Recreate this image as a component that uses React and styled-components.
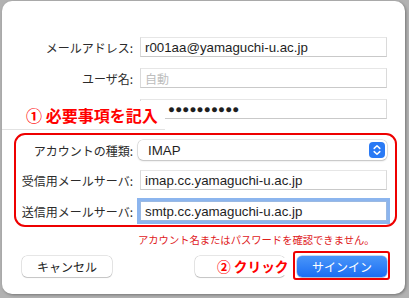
import React from "react";
import styled, { createGlobalStyle } from "styled-components";

const Global = createGlobalStyle`
  html, body { margin: 0; padding: 0; }
  body {
    background: #b2b2b2;
    font-family: "Noto Sans CJK JP", "Liberation Sans", sans-serif;
    width: 409px;
    height: 298px;
    overflow: hidden;
  }
`;

const Page = styled.div`
  padding: 1px 4px 4px 2px;
  width: 409px;
  height: 298px;
  box-sizing: border-box;
`;

const Window = styled.div`
  position: relative;
  width: 403px;
  height: 293px;
  background: #ffffff;
  border-radius: 10px;
  box-shadow: 1px 1px 3px rgba(0, 0, 0, 0.35);
  padding-top: 36px;
  box-sizing: border-box;
  display: flex;
  flex-direction: column;
`;

const Rows = styled.div`
  display: flex;
  flex-direction: column;
  gap: ${(p) => p.$gap}px;
  margin-top: ${(p) => p.$top || 0}px;
  position: relative;
`;

const Highlight = styled(Rows)`
  &::after {
    content: "";
    position: absolute;
    left: 12px;
    right: 8px;
    top: -7px;
    bottom: -6px;
    border: 2px solid #ee0000;
    border-radius: 11px;
    pointer-events: none;
  }
`;

const Row = styled.div`
  display: flex;
  align-items: center;
  height: 20px;
  margin-top: ${(p) => p.$nudge || 0}px;
`;

const Label = styled.div`
  width: 131px;
  margin-right: 7px;
  text-align: right;
  font-size: 12px;
  color: #2b2b2b;
  white-space: nowrap;
`;

const Field = styled.div`
  width: 247px;
  height: 20px;
  box-sizing: border-box;
  border: 1px solid #dadada;
  border-top-color: #e6e6e6;
  border-bottom-color: #c9c9c9;
  padding-left: 4px;
  display: flex;
  align-items: center;
  font-family: "Liberation Sans", sans-serif;
  font-size: 13.3px;
  color: ${(p) => (p.$placeholder ? "#bdbdbd" : "#1e1e1e")};
  ${(p) =>
    p.$placeholder &&
    `font-family: "Noto Sans CJK JP", sans-serif; font-size: 12px;`}
  ${(p) =>
    p.$focus &&
    `border-color: #9ab9e2; box-shadow: 0 0 0 3px #8cb5ee;`}
`;

const Dots = styled.span`
  font-family: "Liberation Sans", sans-serif;
  font-size: 11.5px;
  letter-spacing: 0.2px;
  padding-left: 23px;
  color: #1e1e1e;
`;

const Popup = styled.div`
  width: 249px;
  margin-left: -2px;
  height: 20px;
  box-sizing: border-box;
  border-radius: 5px;
  background: #fff;
  box-shadow: 0 0 0 0.5px rgba(0, 0, 0, 0.18), 0 1px 2px rgba(0, 0, 0, 0.18);
  display: flex;
  align-items: center;
  justify-content: space-between;
  padding: 0 2px 0 10px;
  font-family: "Liberation Sans", sans-serif;
  font-size: 13.3px;
  color: #1e1e1e;
`;

const ErrorText = styled.div`
  margin-top: 12px;
  padding-left: 136px;
  font-size: 10.3px;
  line-height: 14px;
  color: #e0201c;
  white-space: nowrap;
`;

const Footer = styled.div`
  margin-top: 9px;
  display: flex;
  align-items: center;
  padding: 0 18px 0 20px;
`;

const Spacer = styled.div`
  flex: 1;
`;

const Button = styled.div`
  width: 90px;
  height: 21px;
  box-sizing: border-box;
  border-radius: 5px;
  display: flex;
  align-items: center;
  justify-content: center;
  font-size: 12px;
  color: ${(p) => (p.$primary ? "#ffffff" : "#222")};
  background: ${(p) =>
    p.$primary ? "linear-gradient(#4a96f9, #1b6ef3)" : "#ffffff"};
  box-shadow: ${(p) =>
    p.$primary
      ? "0 0 0 0.5px rgba(0,60,180,0.4), 0 1px 1px rgba(0,0,0,0.15)"
      : "0 0 0 0.5px rgba(0,0,0,0.2), 0 1px 1px rgba(0,0,0,0.15)"};
`;

const ClickBox = styled.div`
  position: relative;
  margin-left: 12px;
  &::after {
    content: "";
    position: absolute;
    left: -4px;
    right: -3px;
    top: -5px;
    bottom: -3px;
    border: 2px solid #ee0000;
    border-radius: 3px;
    pointer-events: none;
  }
`;

const BackWrap = styled.div`
  position: relative;
`;

const Note = styled.div`
  position: absolute;
  background: #ffffff;
  color: #ff0000;
  font-weight: 700;
  white-space: nowrap;
`;

const StepNote = styled(Note)`
  left: 0;
  top: 100px;
  width: 163px;
  height: 29px;
  box-sizing: border-box;
  border-bottom: 1px solid #e2e2e2;
  padding-left: 24px;
  font-size: 16px;
  line-height: 28px;
`;

const ClickNote = styled(Note)`
  left: 22px;
  top: 2px;
  height: 17px;
  line-height: 17px;
  font-size: 13.7px;
  padding-right: 2px;
`;

function Stepper() {
  return (
    <svg width="16" height="16" viewBox="0 0 16 16">
      <rect x="0" y="0" width="16" height="16" rx="4" fill="#2a7af5" />
      <path
        d="M5.2 6.4 L8 3.8 L10.8 6.4"
        stroke="#fff"
        strokeWidth="1.5"
        fill="none"
        strokeLinecap="round"
        strokeLinejoin="round"
      />
      <path
        d="M5.2 9.6 L8 12.2 L10.8 9.6"
        stroke="#fff"
        strokeWidth="1.5"
        fill="none"
        strokeLinecap="round"
        strokeLinejoin="round"
      />
    </svg>
  );
}

export default function App() {
  return (
    <>
      <Global />
      <Page>
        <Window>
          <Rows $gap={11}>
            <Row>
              <Label>メールアドレス:</Label>
              <Field>r001aa@yamaguchi-u.ac.jp</Field>
            </Row>
            <Row>
              <Label>ユーザ名:</Label>
              <Field $placeholder>自動</Field>
            </Row>
            <Row>
              <Label />
              <Field>
                <Dots>●●●●●●●●●●</Dots>
              </Field>
            </Row>
          </Rows>
          <Highlight $gap={10} $top={21}>
            <Row>
              <Label>アカウントの種類:</Label>
              <Popup>
                IMAP
                <Stepper />
              </Popup>
            </Row>
            <Row>
              <Label>受信用メールサーバ:</Label>
              <Field>imap.cc.yamaguchi-u.ac.jp</Field>
            </Row>
            <Row $nudge={1}>
              <Label>送信用メールサーバ:</Label>
              <Field $focus>smtp.cc.yamaguchi-u.ac.jp</Field>
            </Row>
          </Highlight>
          <ErrorText>アカウント名またはパスワードを確認できません。</ErrorText>
          <Footer>
            <Button>キャンセル</Button>
            <Spacer />
            <BackWrap>
              <Button />
              <ClickNote>② クリック</ClickNote>
            </BackWrap>
            <ClickBox>
              <Button $primary>サインイン</Button>
            </ClickBox>
          </Footer>
          <StepNote>① 必要事項を記入</StepNote>
        </Window>
      </Page>
    </>
  );
}
